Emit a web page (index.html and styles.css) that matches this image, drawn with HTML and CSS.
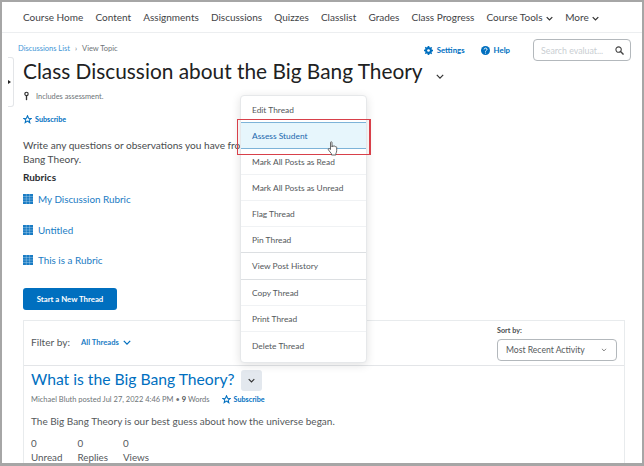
FILE: index.html
```html
<!DOCTYPE html>
<html lang="en">
<head>
<meta charset="utf-8">
<title>View Topic</title>
<link rel="stylesheet" href="styles.css">
</head>
<body>
<div class="frame">
  <nav class="nav">
    <a>Course Home</a><a>Content</a><a>Assignments</a><a>Discussions</a><a>Quizzes</a><a>Classlist</a><a>Grades</a><a>Class Progress</a>
    <a>Course Tools <svg class="nav-chev" viewBox="0 0 10 6"><path d="M1 1l4 4 4-4" fill="none" stroke="#333" stroke-width="1.8"/></svg></a>
    <a>More <svg class="nav-chev" viewBox="0 0 10 6"><path d="M1 1l4 4 4-4" fill="none" stroke="#333" stroke-width="1.8"/></svg></a>
  </nav>
  <div class="side-tab"><span class="side-arrow"></span></div>
  <main class="page">
    <div class="crumb-row">
      <div class="crumbs"><a>Discussions List</a><span class="sep">›</span><span>View Topic</span></div>
      <div class="tools">
        <a class="tool"><svg class="tool-icon" viewBox="0 0 12 12"><path fill="#006fbf" d="M5 0h2l.3 1.6 1.1.5L9.8 1.2l1.1 1.2-.9 1.3.5 1.2L12 5v2l-1.5.3-.5 1.2.9 1.3-1.1 1.2-1.4-.9-1.1.5L7 12H5l-.3-1.6-1.1-.5-1.4.9-1.1-1.2.9-1.3-.5-1.2L0 7V5l1.5-.3.5-1.2-.9-1.3 1.1-1.2 1.4.9 1.1-.5z"/><circle cx="6" cy="6" r="1.8" fill="#fff"/></svg>Settings</a>
        <a class="tool"><svg class="tool-icon" viewBox="0 0 12 12"><circle cx="6" cy="6" r="6" fill="#006fbf"/><path d="M4.1 4.6c0-2.4 3.9-2.4 3.9-.1 0 1.4-2 1.4-2 3" fill="none" stroke="#fff" stroke-width="1.3"/><circle cx="6" cy="9.3" r=".8" fill="#fff"/></svg>Help</a>
        <div class="search"><span>Search evaluat...</span><svg class="search-icon" viewBox="0 0 10 10"><circle cx="4" cy="4" r="3" fill="none" stroke="#444" stroke-width="1.2"/><path d="M6.2 6.2L9.5 9.5" stroke="#444" stroke-width="1.6"/></svg></div>
      </div>
    </div>
    <div class="title-row">
      <h1>Class Discussion about the Big Bang Theory</h1>
      <svg class="title-chev" viewBox="0 0 10 6"><path d="M1 1l4 4 4-4" fill="none" stroke="#333" stroke-width="1.5"/></svg>
    </div>
    <div class="assess"><svg class="key" viewBox="0 0 6 11"><circle cx="3" cy="3" r="2" fill="none" stroke="#333" stroke-width="1.4"/><path d="M3 5v5.5" stroke="#333" stroke-width="1.6"/></svg>Includes assessment.</div>
    <a class="subscribe sub-top"><svg class="star" viewBox="0 0 12 12"><path d="M6 1l1.4 3.3 3.6.3-2.7 2.3.8 3.5L6 8.2l-3.1 1.9.8-3.5L1 4.6l3.6-.3z" fill="none" stroke="#006fbf" stroke-width="1.4"/></svg>Subscribe</a>
    <p class="intro">Write any questions or observations you have from the readings on the Big<br>Bang Theory.</p>
    <div class="rubrics-title">Rubrics</div>
    <ul class="rubrics">
      <li><svg class="grid" viewBox="0 0 10 10"><use href="#g"/></svg><a>My Discussion Rubric</a></li>
      <li><svg class="grid" viewBox="0 0 10 10"><use href="#g"/></svg><a>Untitled</a></li>
      <li><svg class="grid" viewBox="0 0 10 10"><use href="#g"/></svg><a>This is a Rubric</a></li>
    </ul>
    <button class="start">Start a New Thread</button>
    <section class="panel">
      <div class="filter">
        <div class="filter-left"><span class="filter-label">Filter by:</span><a class="filter-link">All Threads <svg class="filter-chev" viewBox="0 0 10 6"><path d="M1 1l4 4 4-4" fill="none" stroke="#006fbf" stroke-width="1.6"/></svg></a></div>
        <div class="sort"><label>Sort by:</label><div class="select"><span>Most Recent Activity</span><svg class="select-chev" viewBox="0 0 10 6"><path d="M1.5 1l3.5 3.5L8.500 1" fill="none" stroke="#555" stroke-width="1.2"/></svg></div></div>
      </div>
      <div class="thread">
        <div class="thread-head"><h2>What is the Big Bang Theory?</h2><span class="thread-btn"><svg class="thread-chev" viewBox="0 0 10 6"><path d="M1 1l4 4 4-4" fill="none" stroke="#333" stroke-width="1.6"/></svg></span></div>
        <div class="meta"><span>Michael Bluth posted Jul 27, 2022 4:46 PM • <b>9</b> Words</span><a class="subscribe"><svg class="star" viewBox="0 0 12 12"><path d="M6 1l1.400 3.300 3.600.3-2.700 2.300.8 3.500L6 8.200l-3.100 1.900.8-3.500L1 4.600l3.600-.3z" fill="none" stroke="#006fbf" stroke-width="1.400"/></svg>Subscribe</a></div>
        <p class="body">The Big Bang Theory is our best guess about how the universe began.</p>
        <div class="stats"><div><span>0</span><span>Unread</span></div><div><span>0</span><span>Replies</span></div><div><span>0</span><span>Views</span></div></div>
      </div>
    </section>
  </main>
  <ul class="menu">
    <li>Edit Thread</li>
    <li class="active">Assess Student</li>
    <li>Mark All Posts as Read</li>
    <li>Mark All Posts as Unread</li>
    <li>Flag Thread</li>
    <li class="strong">Pin Thread</li>
    <li class="strong tall">View Post History</li>
    <li>Copy Thread</li>
    <li>Print Thread</li>
    <li class="last">Delete Thread</li>
  </ul>
  <div class="callout"></div>
  <svg class="cursor" viewBox="0 0 12 15"><path d="M3.500 1.500c0-1 1.500-1 1.500 0V6l.3-1c.6-.6 1.400-.3 1.400.4l.2-.1c.6-.5 1.400-.2 1.400.5.600-.4 1.400-.1 1.400.6v3.300c0 1.200-.4 1.800-.8 2.800V14H4.500v-1.200L1.500 9C.8 8 1.700 7 2.700 7.800l.8.8z" fill="#fff" stroke="#444" stroke-width=".8"/></svg>
</div>
<svg class="defs" width="0" height="0"><defs><g id="g"><rect width="10" height="10" fill="#1a7cc4"/><path d="M0 2.500h10M0 5h10M0 7.500h10M3.300 0v10M6.600 0v10" stroke="#cfe4f5" stroke-width=".35"/></g></defs></svg>
</body>
</html>
```
FILE: styles.css
```css
* { box-sizing: border-box; }
html, body { margin: 0; height: 100%; overflow: hidden; }
body { background: #a6a6a6; font-family: Lato, "Liberation Sans", sans-serif; color: #4a4a4a; }
a { color: inherit; text-decoration: none; }
.defs { position: absolute; }

.frame { position: absolute; inset: 2px 2px 3px 2px; background: #fff; overflow: hidden; }

.nav { display: flex; gap: 12.150px; height: 31px; padding: 0 0 0 21px; align-items: center; border-bottom: 1px solid #eceef0; font-size: 10px; color: #3f4346; white-space: nowrap; }
.nav-chev { width: 7px; height: 5px; margin-left: 1px; vertical-align: 0; }

.side-tab { position: absolute; left: 6px; top: 55px; width: 6px; height: 50px; border: 1px solid #e3e5e8; border-left: 0; border-radius: 0 3px 3px 0; background: #fff; display: flex; align-items: center; }
.side-arrow { width: 0; height: 0; border-left: 3px solid #222; border-top: 2.500px solid transparent; border-bottom: 2.500px solid transparent; }

.page { padding: 0 0 0 21px; }
.crumb-row { display: flex; justify-content: space-between; align-items: flex-start; height: 19px; padding-top: 6px; padding-right: 11px; }
.crumbs { font-size: 7.500px; margin-top: 5px; color: #6e7477; display: flex; gap: 5px; margin-left: -5px; }
.crumbs a { color: #3f96d6; }
.tools { display: flex; align-items: center; gap: 16px; }
.tool { display: flex; align-items: center; gap: 4px; font-size: 7.800px; font-weight: 700; color: #006fbf; }
.tool-icon { width: 9px; height: 9px; }
.search { width: 98px; height: 22px; margin-left: 7px; border: 1px solid #b3b8bc; border-radius: 4px; display: flex; align-items: center; justify-content: space-between; padding: 0 6px 0 7px; font-size: 8.800px; color: #c9ced2; }
.search-icon { width: 9px; height: 9px; }

.title-row { display: flex; align-items: center; margin-top: 0; height: 36px; }
h1 { margin: 0; font-size: 20.850px; font-weight: 400; color: #202122; white-space: nowrap; }
.title-chev { width: 8px; height: 5px; margin: 12px 0 0 13px; }

.assess { display: flex; align-items: center; gap: 6px; font-size: 7.400px; color: #6e7477; margin-top: 1px; height: 14px; }
.key { width: 5px; height: 10px; margin: 0 1px 0 1px; }

.subscribe { display: inline-flex; align-items: center; gap: 3px; font-size: 7.200px; font-weight: 700; color: #006fbf; }
.star { width: 9px; height: 9px; }
.sub-top { margin-top: 10px; height: 12px; }

.intro { margin: 11px 0 0; font-size: 10.100px; line-height: 14.700px; color: #494c4e; white-space: nowrap; }
.rubrics-title { font-size: 10px; font-weight: 700; color: #2a2c2e; margin-top: 3px; line-height: 14px; }
.rubrics { list-style: none; margin: 0; padding: 0; }
.rubrics li { display: flex; align-items: center; gap: 5px; height: 30.500px; font-size: 9.850px; color: #1a7cc4; }
.grid { width: 10px; height: 10px; }

.start { display: block; margin-top: 13px; width: 94px; height: 22px; border: 0; border-radius: 3px; background: #006fbf; color: #fff; font: 700 7.800px Lato, sans-serif; padding: 0; }

.panel { margin-top: 10px; width: 602px; height: 200px; border: 1px solid #e8ebed; border-bottom: 0; }
.filter { display: flex; justify-content: space-between; height: 45px; border-bottom: 1px solid #e3e5e8; padding: 0 7px 0 7px; }
.filter-left { display: flex; align-items: center; gap: 11px; padding-bottom: 2px; }
.filter-label { font-size: 10.200px; color: #54585b; }
.filter-link { font-size: 7.600px; font-weight: 700; color: #1a7cc4; }
.filter-chev { width: 8px; height: 5px; margin-left: 2px; vertical-align: 0; }
.sort label { display: block; font-size: 7.200px; font-weight: 700; color: #494c4e; margin-top: 5px; }
.select { width: 120px; height: 22px; margin-top: 4px; border: 1px solid #b3b8bc; border-radius: 4px; display: flex; align-items: center; justify-content: space-between; padding: 0 8px; font-size: 8.600px; color: #565a5c; }
.select-chev { width: 6px; height: 4px; margin-right: 1px; }

.thread { padding: 3px 7px 0; }
.thread-head { display: flex; align-items: center; gap: 6px; height: 22px; }
h2 { margin: 0 0 3px; font-size: 15.700px; font-weight: 400; color: #006fbf; white-space: nowrap; }
.thread-btn { width: 21px; height: 21px; border-radius: 3px; background: #e3e8ee; display: flex; align-items: center; justify-content: center; }
.thread-chev { width: 7px; height: 5px; }
.meta { display: flex; align-items: center; gap: 12px; font-size: 7.500px; color: #6e7477; height: 14px; margin-top: 1px; }
.meta b { color: #494c4e; }
.body { margin: 8px 0 0; font-size: 10px; line-height: 14px; color: #54585b; }
.stats { display: flex; gap: 15px; margin-top: 9px; font-size: 9.800px; color: #54585b; }
.stats div { display: flex; flex-direction: column; gap: 1px; line-height: 13px; }

.menu { position: absolute; left: 238px; top: 93px; width: 127px; margin: 0; padding: 1px 0 0; list-style: none; background: #fff; border: 1px solid #e6e8ea; border-radius: 4px; box-shadow: 0 2px 10px rgba(0,0,0,.12); font-size: 8.400px; color: #54585b; }
.menu li { height: 26px; padding-left: 11px; display: flex; align-items: center; border-bottom: 1px solid #f0f2f4; }
.menu li.active { background: #e7f6fc; color: #1c68ad; border-top: 1px solid #7db3d8; border-bottom: 1px solid #7db3d8; margin-top: -1px; height: 27px; }
.menu li.strong { border-bottom: 1px solid #dcdfe2; }
.menu li.tall { height: 27px; }
.menu li.last { border-bottom: 0; height: 30px; padding-bottom: 3px; }

.callout { position: absolute; left: 235px; top: 117px; width: 134px; height: 36px; border: 1px solid #d8404a; border-right-width: 2px; }
.cursor { position: absolute; left: 325px; top: 139px; width: 12px; height: 15px; }
```
